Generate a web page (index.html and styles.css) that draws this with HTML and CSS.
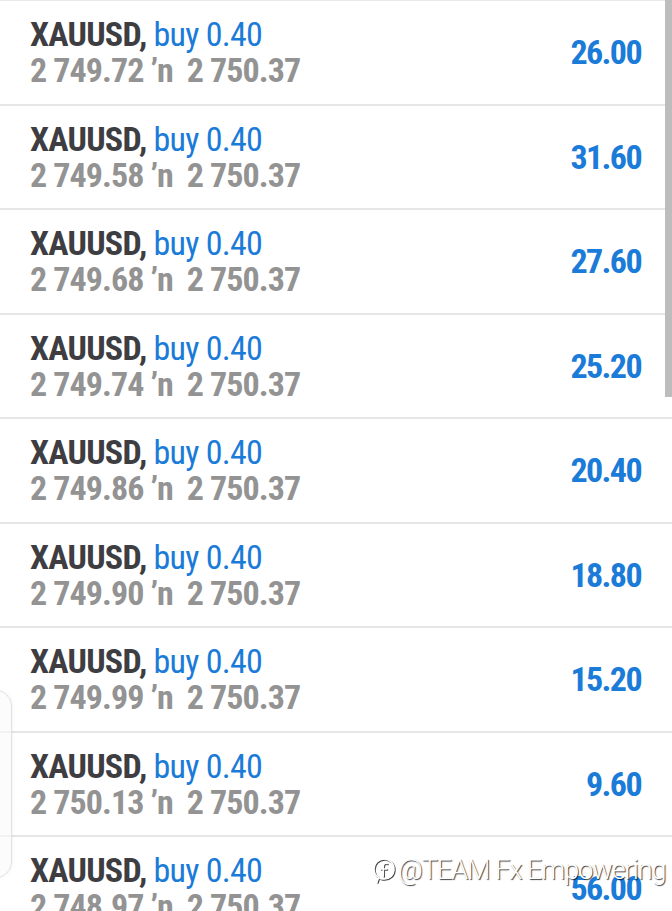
FILE: index.html
```html
<!DOCTYPE html>
<html lang="en">
<head>
<meta charset="utf-8">
<title>Positions</title>
<link rel="stylesheet" href="styles.css">
</head>
<body>
<div class="screen">
  <ul class="positions">
    <li class="row"><div class="info"><div class="title"><span class="sym">XAUUSD,</span> <span class="side">buy 0.40</span></div><div class="prices">2 749.72 <span class="arrow">ʼn</span>&nbsp; 2 750.37</div></div><div class="profit">26.00</div></li>
    <li class="row"><div class="info"><div class="title"><span class="sym">XAUUSD,</span> <span class="side">buy 0.40</span></div><div class="prices">2 749.58 <span class="arrow">ʼn</span>&nbsp; 2 750.37</div></div><div class="profit">31.60</div></li>
    <li class="row"><div class="info"><div class="title"><span class="sym">XAUUSD,</span> <span class="side">buy 0.40</span></div><div class="prices">2 749.68 <span class="arrow">ʼn</span>&nbsp; 2 750.37</div></div><div class="profit">27.60</div></li>
    <li class="row"><div class="info"><div class="title"><span class="sym">XAUUSD,</span> <span class="side">buy 0.40</span></div><div class="prices">2 749.74 <span class="arrow">ʼn</span>&nbsp; 2 750.37</div></div><div class="profit">25.20</div></li>
    <li class="row"><div class="info"><div class="title"><span class="sym">XAUUSD,</span> <span class="side">buy 0.40</span></div><div class="prices">2 749.86 <span class="arrow">ʼn</span>&nbsp; 2 750.37</div></div><div class="profit">20.40</div></li>
    <li class="row"><div class="info"><div class="title"><span class="sym">XAUUSD,</span> <span class="side">buy 0.40</span></div><div class="prices">2 749.90 <span class="arrow">ʼn</span>&nbsp; 2 750.37</div></div><div class="profit">18.80</div></li>
    <li class="row"><div class="info"><div class="title"><span class="sym">XAUUSD,</span> <span class="side">buy 0.40</span></div><div class="prices">2 749.99 <span class="arrow">ʼn</span>&nbsp; 2 750.37</div></div><div class="profit">15.20</div></li>
    <li class="row"><div class="info"><div class="title"><span class="sym">XAUUSD,</span> <span class="side">buy 0.40</span></div><div class="prices">2 750.13 <span class="arrow">ʼn</span>&nbsp; 2 750.37</div></div><div class="profit">9.60</div></li>
    <li class="row"><div class="info"><div class="title"><span class="sym">XAUUSD,</span> <span class="side">buy 0.40</span></div><div class="prices">2 748.97 <span class="arrow">ʼn</span>&nbsp; 2 750.37</div></div><div class="profit">56.00</div></li>
  </ul>
  <div class="scrollbar"></div>
  <div class="edge-panel"></div>
  <div class="watermark">
    <svg class="wm-logo" width="24" height="30" viewBox="0 0 24 30" aria-hidden="true">
      <path d="M5 27 L6.5 22.5 C3.5 20.5 2 17.5 2 14 C2 8 6.5 4 12 4 C17.5 4 22 8 22 14 C22 20 17.5 24 12 24 C10.5 24 9 23.7 7.8 23.2" fill="none" stroke="#fff" stroke-width="1.5" stroke-linecap="round" stroke-linejoin="round"/>
      <path d="M15 8.5 C13 7.8 11.3 8.8 11.3 11 L11.3 21 M8.5 14 L14.5 14" fill="none" stroke="#fff" stroke-width="1.5" stroke-linecap="round"/>
    </svg>
    <span class="wm-text">@TEAM Fx Empowering</span>
  </div>
</div>
</body>
</html>
```
FILE: styles.css
```css
html, body {
  margin: 0;
  padding: 0;
  background: #ffffff;
}
.screen {
  position: relative;
  width: 672px;
  height: 911px;
  overflow: hidden;
  background: #ffffff;
  font-family: "Roboto Condensed", Roboto, "Liberation Sans", sans-serif;
}
.positions {
  list-style: none;
  margin: 0;
  padding: 0;
  border-top: 1px solid #e8e8e8;
}
.row {
  box-sizing: border-box;
  height: 104.5px;
  border-bottom: 2px solid #e6e6e6;
  display: flex;
  align-items: center;
  justify-content: space-between;
  padding: 0 31px 0 30px;
}
.info {
  display: flex;
  flex-direction: column;
}
.title, .prices {
  font-size: 34px;
  line-height: 36px;
  white-space: nowrap;
  letter-spacing: -0.75px;
}
.sym {
  font-weight: 700;
  color: #3d3d42;
}
.side {
  font-weight: 400;
  color: #1a7bd8;
}
.prices {
  font-weight: 700;
  color: #939393;
  letter-spacing: -0.9px;
}
.arrow {
  font-weight: 700;
}
.profit {
  font-size: 34px;
  line-height: 36px;
  font-weight: 700;
  color: #1a7bd8;
  letter-spacing: -1.6px;
}
.scrollbar {
  position: absolute;
  top: 0;
  right: 0;
  width: 7px;
  height: 397px;
  background: #bdbdbd;
}
.edge-panel {
  position: absolute;
  left: -20px;
  top: 690px;
  width: 32px;
  height: 188px;
  box-sizing: border-box;
  border: 1px solid #e2e2e2;
  border-radius: 16px;
  background: rgba(250, 250, 250, 0.6);
  box-shadow: 1px 0 3px rgba(0, 0, 0, 0.04);
}
.watermark {
  position: absolute;
  left: 372px;
  top: 854px;
  display: flex;
  align-items: center;
  gap: 2px;
  white-space: nowrap;
}
.wm-logo {
  filter: drop-shadow(1px 1px 0.6px rgba(0, 0, 0, 0.7));
}
.wm-text {
  font-family: Roboto, "Liberation Sans", sans-serif;
  font-weight: 300;
  font-size: 27px;
  line-height: 32px;
  color: #ffffff;
  letter-spacing: -1px;
  text-shadow: 1px 1px 1px rgba(0, 0, 0, 0.75);
}
```
